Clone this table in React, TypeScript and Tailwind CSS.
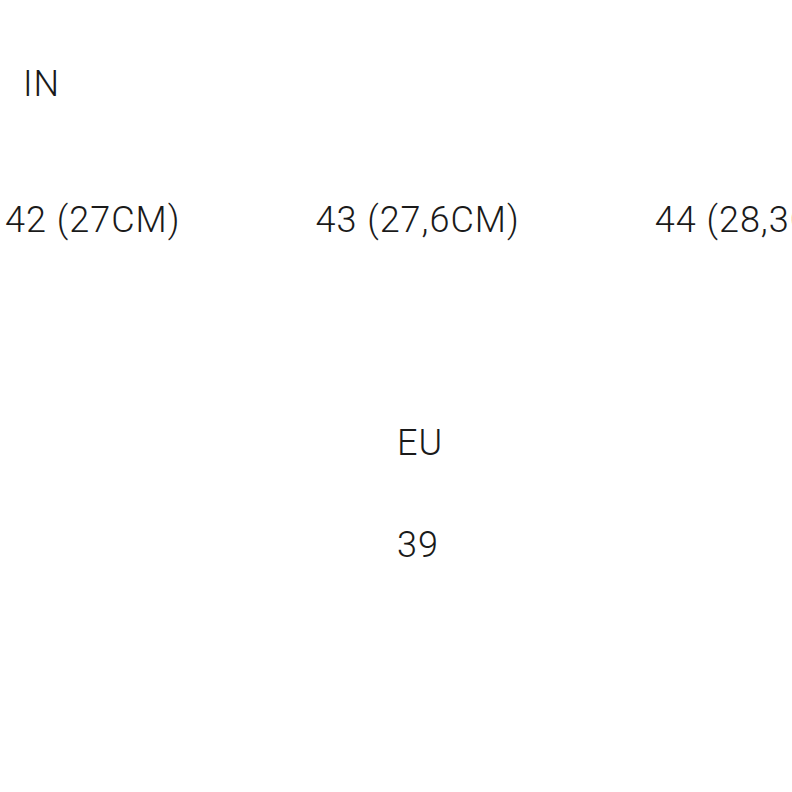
export default function App() {
  const sizes = ["42 (27CM)", "43 (27,6CM)", "44 (28,3CM)"];
  return (
    <div
      className="w-[792px] h-[792px] bg-white overflow-hidden text-[#1a1a1a] font-light tracking-[1px]"
      style={{ fontFamily: "Roboto, 'Liberation Sans', sans-serif" }}
    >
      <div className="pt-[64px] pl-[23px] text-[36px] leading-[40px]">IN</div>
      <div className="mt-[96px] pl-[5px] flex gap-[135px] whitespace-nowrap text-[36px] leading-[40px]">
        {sizes.map((s) => (
          <div key={s} className="shrink-0">{s}</div>
        ))}
      </div>
      <div className="mt-[183px] pl-[397px] text-[36px] leading-[40px]">EU</div>
      <div className="mt-[62px] pl-[397px] text-[36px] leading-[40px]">39</div>
    </div>
  );
}
